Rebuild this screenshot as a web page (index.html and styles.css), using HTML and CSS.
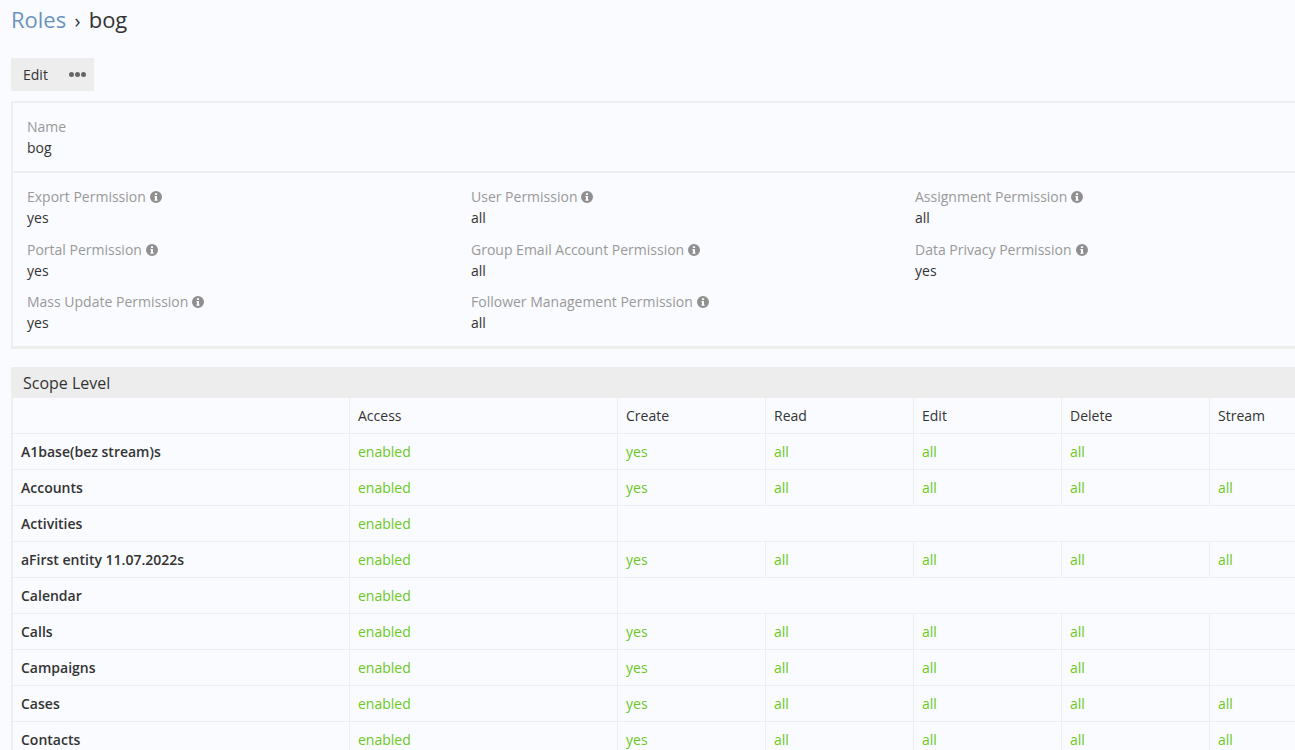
FILE: index.html
```html
<!DOCTYPE html>
<html lang="en">
<head>
<meta charset="UTF-8" />
<meta name="viewport" content="width=device-width, initial-scale=1" />
<title>Roles - bog</title>
<link rel="stylesheet" href="styles.css">
</head>
<body>

<svg class="icon-defs" width="0" height="0" aria-hidden="true">
  <symbol id="info" viewBox="0 0 12 12">
    <path fill-rule="evenodd" d="M6 0a6 6 0 1 1 0 12A6 6 0 0 1 6 0zM4.9 2.3v1.8h2.2V2.3zM4.4 5v1.2h.6v2.3h-.6v1.2h3.2V8.5H7V5z"/>
  </symbol>
</svg>

<main class="page">
  <h1 class="title"><a href="#">Roles</a> <span class="sep">›</span> bog</h1>

  <div class="actions">
    <button class="btn">Edit</button>
    <button class="btn btn-more" aria-label="More"><i></i><i></i><i></i></button>
  </div>

  <section class="panel">
    <div class="panel-row">
      <div class="field">
        <div class="label">Name</div>
        <div class="value">bog</div>
      </div>
    </div>
    <div class="panel-row perms">
      <div class="field">
        <div class="label">Export Permission <svg class="info"><use href="#info"/></svg></div>
        <div class="value">yes</div>
      </div>
      <div class="field">
        <div class="label">User Permission <svg class="info"><use href="#info"/></svg></div>
        <div class="value">all</div>
      </div>
      <div class="field">
        <div class="label">Assignment Permission <svg class="info"><use href="#info"/></svg></div>
        <div class="value">all</div>
      </div>
      <div class="field">
        <div class="label">Portal Permission <svg class="info"><use href="#info"/></svg></div>
        <div class="value">yes</div>
      </div>
      <div class="field">
        <div class="label">Group Email Account Permission <svg class="info"><use href="#info"/></svg></div>
        <div class="value">all</div>
      </div>
      <div class="field">
        <div class="label">Data Privacy Permission <svg class="info"><use href="#info"/></svg></div>
        <div class="value">yes</div>
      </div>
      <div class="field">
        <div class="label">Mass Update Permission <svg class="info"><use href="#info"/></svg></div>
        <div class="value">yes</div>
      </div>
      <div class="field">
        <div class="label">Follower Management Permission <svg class="info"><use href="#info"/></svg></div>
        <div class="value">all</div>
      </div>
    </div>
  </section>

  <section class="scope">
    <h2 class="scope-title">Scope Level</h2>
    <table class="scope-table">
      <colgroup>
        <col class="col-name"><col class="col-access"><col class="col-act"><col class="col-act"><col class="col-act"><col class="col-act"><col class="col-act">
      </colgroup>
      <thead>
        <tr><th></th><th>Access</th><th>Create</th><th>Read</th><th>Edit</th><th>Delete</th><th>Stream</th></tr>
      </thead>
      <tbody>
        <tr><td class="name">A1base(bez stream)s</td><td class="on">enabled</td><td class="on">yes</td><td class="on">all</td><td class="on">all</td><td class="on">all</td><td></td></tr>
        <tr><td class="name">Accounts</td><td class="on">enabled</td><td class="on">yes</td><td class="on">all</td><td class="on">all</td><td class="on">all</td><td class="on">all</td></tr>
        <tr><td class="name">Activities</td><td class="on">enabled</td><td colspan="5"></td></tr>
        <tr><td class="name">aFirst entity 11.07.2022s</td><td class="on">enabled</td><td class="on">yes</td><td class="on">all</td><td class="on">all</td><td class="on">all</td><td class="on">all</td></tr>
        <tr><td class="name">Calendar</td><td class="on">enabled</td><td colspan="5"></td></tr>
        <tr><td class="name">Calls</td><td class="on">enabled</td><td class="on">yes</td><td class="on">all</td><td class="on">all</td><td class="on">all</td><td></td></tr>
        <tr><td class="name">Campaigns</td><td class="on">enabled</td><td class="on">yes</td><td class="on">all</td><td class="on">all</td><td class="on">all</td><td></td></tr>
        <tr><td class="name">Cases</td><td class="on">enabled</td><td class="on">yes</td><td class="on">all</td><td class="on">all</td><td class="on">all</td><td class="on">all</td></tr>
        <tr><td class="name">Contacts</td><td class="on">enabled</td><td class="on">yes</td><td class="on">all</td><td class="on">all</td><td class="on">all</td><td class="on">all</td></tr>
      </tbody>
    </table>
  </section>
</main>

</body>
</html>
```

FILE: styles.css
```css
html, body {
  height: 100%;
  overflow: hidden;
}
body {
  margin: 0;
  background: #fafbfe;
  color: #333;
  font-family: "Open Sans", sans-serif;
  font-size: 14px;
  line-height: 20px;
}
.icon-defs {
  display: block;
}
.page {
  width: 1346px;
  margin-left: 11px;
}
.title {
  margin: 0;
  padding-top: 4px;
  height: 58px;
  box-sizing: border-box;
  font-size: 22px;
  font-weight: 400;
  line-height: 30px;
}
.title a {
  color: #6a94bd;
  text-decoration: none;
}
.title .sep {
  margin: 0 2.5px;
  font-size: 20px;
}
.actions {
  display: flex;
  height: 33px;
  width: 83px;
  background: #ededed;
}
.btn {
  border: 0;
  background: none;
  color: #333;
  font: inherit;
  padding: 0 0 0 12px;
}
.btn-more {
  display: flex;
  align-items: center;
  gap: 1px;
  padding-left: 21px;
}
.btn-more i {
  width: 5px;
  height: 5px;
  border-radius: 50%;
  background: #666;
}
.panel {
  margin-top: 10px;
  border: 2px solid #eee;
  border-right: 0;
  border-bottom-width: 3px;
}
.panel-row {
  padding: 14px 14px 13px;
  border-bottom: 2px solid #eee;
}
.panel-row:last-child {
  border-bottom: 0;
}
.perms {
  display: grid;
  grid-template-columns: repeat(3, 444px);
  row-gap: 11.5px;
  padding-bottom: 13px;
}
.label {
  display: flex;
  align-items: center;
  gap: 4px;
  color: #999;
  height: 20px;
  margin-bottom: 1px;
}
.value {
  height: 20px;
}
.info {
  width: 12px;
  height: 12px;
  fill: #8f8f8f;
}
.scope {
  margin-top: 18px;
}
.scope-title {
  margin: 0;
  height: 31px;
  padding-left: 12px;
  background: #ededed;
  font-size: 16px;
  font-weight: 400;
  line-height: 32px;
}
.scope-table {
  table-layout: fixed;
  width: 1346px;
  border-collapse: separate;
  border-spacing: 0;
  border-left: 2px solid #eee;
}
.col-name { width: 336px; }
.col-access { width: 268px; }
.col-act { width: 148px; }
.scope-table th,
.scope-table td {
  height: 35px;
  padding: 0 8px;
  border-bottom: 1px solid #eee;
  border-left: 1px solid #eee;
  text-align: left;
  font-weight: 400;
  box-sizing: content-box;
}
.scope-table tr > :first-child {
  border-left: 0;
}
.scope-table .name {
  font-weight: 600;
}
.scope-table .on {
  color: #6bc924;
}
```
